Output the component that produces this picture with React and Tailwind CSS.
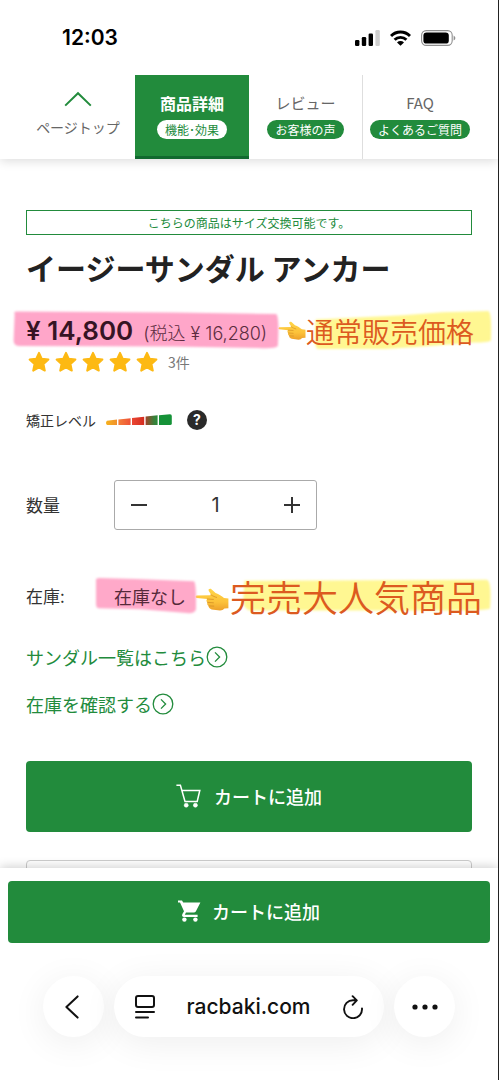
import React, { useState } from "react";

function StatusBar() {
  return (
    <div className="relative z-20 flex h-[75px] shrink-0 items-center justify-between bg-white pr-[42px] pl-[62px]">
      <time className="font-['Inter',sans-serif] text-[21px] leading-7 font-semibold text-black">12:03</time>
      <div className="flex items-center gap-[10px]">
        <svg width="25" height="16" viewBox="0 0 25 16" aria-label="電波">
          <rect x="0" y="10" width="4.4" height="6" rx="1.2" />
          <rect x="6.8" y="7" width="4.4" height="9" rx="1.2" />
          <rect x="13.6" y="3.6" width="4.4" height="12.4" rx="1.2" />
          <rect x="20.4" y="0" width="4.4" height="16" rx="1.2" fill="#cfcfcf" />
        </svg>
        <svg width="21" height="16" viewBox="0 0 21 16" aria-label="Wi-Fi">
          <g fill="none" stroke="#000" strokeWidth="2.9">
            <path d="M1 6 A13.4 13.4 0 0 1 20 6" />
            <path d="M4.6 9.8 A8.3 8.3 0 0 1 16.4 9.8" />
          </g>
          <path d="M10.5 15.8 L7 12.4 A5 5 0 0 1 14 12.4 Z" />
        </svg>
        <svg width="35" height="16" viewBox="0 0 35 16" aria-label="バッテリー">
          <rect x="0.6" y="0.6" width="30.6" height="14.8" rx="4.6" fill="none" stroke="#8f8f8f" strokeWidth="1.1" />
          <rect x="2.4" y="2.4" width="25.4" height="11.2" rx="3.2" />
          <path d="M32.6 5.4 Q34.4 6.4 34.4 8 Q34.4 9.6 32.6 10.6 Z" fill="#8f8f8f" />
        </svg>
      </div>
    </div>
  );
}

function Tab({ title, tag, active }) {
  return (
    <a
      href="#"
      className={
        active
          ? "flex flex-col items-center border-b-[3px] border-[#11692f] bg-[#228b3c] pt-[18px] text-white"
          : "flex flex-col items-center border-r border-[#dedede] pt-[18px] text-[#666] last:border-r-0"
      }
    >
      <span className={active ? "text-[16px] leading-5 font-bold" : "text-[15px] leading-5"}>{title}</span>
      <span
        className={
          active
            ? "mt-[7px] rounded-full bg-white px-2 text-[12px] leading-[19px] whitespace-nowrap text-[#228b3c]"
            : "mt-[7px] rounded-full bg-[#228b3c] px-2 text-[12px] leading-[19px] whitespace-nowrap text-white"
        }
      >
        {tag}
      </span>
    </a>
  );
}

function PageNav() {
  return (
    <nav className="relative z-10 grid h-[84px] shrink-0 grid-cols-4 bg-white px-[21px] shadow-[0_2px_10px_rgba(0,0,0,0.14)]">
      <a href="#" className="flex flex-col items-center pt-4 text-[#666]">
        <svg width="28" height="16" viewBox="0 0 28 16" fill="none" stroke="#228b3c" strokeWidth="2" aria-hidden="true">
          <path d="M1.2 14.6 L14 2.2 L26.8 14.6" />
        </svg>
        <span className="mt-[10px] text-[14px] leading-5 whitespace-nowrap">ページトップ</span>
      </a>
      <Tab title="商品詳細" tag="機能･効果" active />
      <Tab title="レビュー" tag="お客様の声" />
      <Tab title="FAQ" tag="よくあるご質問" />
    </nav>
  );
}

function PointingHand({ className }) {
  return (
    <svg className={className} viewBox="0 0 34 24" aria-label="指差し">
      <defs>
        <linearGradient id="skin" x1="0" y1="0" x2="0" y2="1">
          <stop offset="0" stopColor="#ffd548" />
          <stop offset="0.6" stopColor="#fcc23a" />
          <stop offset="1" stopColor="#eda02a" />
        </linearGradient>
      </defs>
      <path
        fill="url(#skin)"
        d="M1.6 7.4 C0.2 7.6 0.2 9.8 1.8 10 L12.2 11 C11 12 11.4 13.8 12.4 14.4 C11.8 15.8 12.4 17.2 13.6 17.8 C13.4 19.6 14.8 21 16.6 21.4 L25 22.6 C27 22.6 28.4 21.6 29.4 20.6 L33.4 20.2 L33.4 10.6 L29 10 C26.6 8 24 6.2 20.6 5 L16.4 1.2 C15 0.2 12.8 1.2 13.8 3 L16 6.6 L15 7.2 Z"
      />
      <path
        fill="none"
        stroke="#d08a22"
        strokeWidth="0.7"
        strokeLinecap="round"
        d="M12.4 11 L18.4 11.4 M12.6 14.4 L18.4 14.8 M13.8 17.9 L18.8 18.1 M16 6.8 C18 8.2 20 9 21.6 9.4"
      />
    </svg>
  );
}

function Marker({ className, d, fill }) {
  return (
    <svg className={className} viewBox="0 0 100 40" preserveAspectRatio="none" aria-hidden="true">
      <path d={d} fill={fill} />
    </svg>
  );
}

function Stars() {
  return (
    <div className="flex gap-[5px] pl-[2px]" role="img" aria-label="5つ星">
      {[0, 1, 2, 3, 4].map((i) => (
        <svg key={i} width="22" height="22" viewBox="0 0 22 22" fill="#fdb913" stroke="#fdb913" strokeWidth="2" strokeLinejoin="round" aria-hidden="true">
          <path d="M11 1.8 L13.8 7.8 L20.4 8.6 L15.5 13.1 L16.8 19.6 L11 16.4 L5.2 19.6 L6.5 13.1 L1.6 8.6 L8.2 7.8 Z" />
        </svg>
      ))}
    </div>
  );
}

function LevelGauge() {
  return (
    <svg width="67" height="12" viewBox="0 0 67 12" aria-label="矯正レベル 5">
      <defs>
        <linearGradient id="g1">
          <stop offset="0" stopColor="#f6b21c" />
          <stop offset="1" stopColor="#f0902c" />
        </linearGradient>
        <linearGradient id="g2">
          <stop offset="0" stopColor="#f4803a" />
          <stop offset="1" stopColor="#ee5238" />
        </linearGradient>
        <linearGradient id="g3">
          <stop offset="0" stopColor="#ea4632" />
          <stop offset="1" stopColor="#d42c20" />
        </linearGradient>
        <linearGradient id="g4">
          <stop offset="0" stopColor="#a0432a" />
          <stop offset="0.7" stopColor="#3a7f3a" />
          <stop offset="1" stopColor="#2a8a3a" />
        </linearGradient>
      </defs>
      <path d="M2 6.8 L12 5.6 V11 H2 Q0 9 2 6.8 Z" fill="url(#g1)" />
      <path d="M13.4 5.4 L25.6 4.2 V11 H13.4 Z" fill="url(#g2)" />
      <path d="M27 4 L39.2 2.7 V11 H27 Z" fill="url(#g3)" />
      <path d="M40.6 2.5 L52.6 1.3 V11 H40.6 Z" fill="url(#g4)" />
      <path d="M54 1.2 L65 0.2 Q66.8 0.2 66.8 2 V9.4 Q66.8 11 65 11 H54 Z" fill="#159238" />
    </svg>
  );
}

function CircleChevron() {
  return (
    <svg width="22" height="22" viewBox="0 0 22 22" fill="none" stroke="currentColor" strokeWidth="1.3" aria-hidden="true">
      <circle cx="11" cy="11" r="9.8" />
      <path d="M9 6.4 L13.6 11 L9 15.6" />
    </svg>
  );
}

function Product() {
  const [qty, setQty] = useState(1);
  return (
    <main className="min-h-0 flex-1 overflow-hidden px-[26px] pt-[51px]">
      <p className="border border-[#228b3c] text-center text-[12px] leading-[23px] text-[#228b3c]">
        こちらの商品はサイズ交換可能です。
      </p>
      <h1 className="mt-3 text-[30px] leading-10 font-bold whitespace-nowrap text-[#222]">イージーサンダル アンカー</h1>

      <div className="mt-[26px] flex h-9 items-center whitespace-nowrap">
        <div className="relative isolate flex w-[252px] shrink-0 items-baseline gap-[10px] font-['Inter','Noto_Sans_CJK_JP',sans-serif]">
          <Marker
            className="absolute -top-[5px] -left-[14px] -z-10 h-10 w-[268px] blur-[1px]"
            fill="#ffa6c9"
            d="M1 4 Q0.4 1.5 2 1.5 L60 2.5 L98.6 4 Q99.8 6 99.2 36 Q98 39 92 38 L60 36.5 L3 36 Q0.5 36 0.6 30 Z"
          />
          <span className="text-[26px] leading-[32px] font-semibold text-[#361424]">¥ 14,800</span>
          <span className="text-[18px] leading-5 font-light text-[#5c2c40]">(税込 ¥ 16,280)</span>
        </div>
        <PointingHand className="h-5 w-7 shrink-0" />
        <div className="relative isolate text-[28px] leading-9 font-[350] text-[#dc5a20]">
          <Marker
            className="absolute -top-1 left-2 -z-10 h-[42px] w-[178px] blur-[1px]"
            fill="#fff792"
            d="M1 10 L50 6 L72 3 L98 2 Q100 4 99.4 30 Q98 32 90 32 L60 36 L40 38 L2 38 Q0 36 0.6 20 Z"
          />
          通常販売価格
        </div>
      </div>
      <div className="flex h-[25px] items-center gap-[10px]">
        <Stars />
        <span className="text-[14px] leading-5 text-[#777]">3件</span>
      </div>

      <div className="mt-9 flex h-5 items-center">
        <span className="text-[14px] leading-5 whitespace-nowrap text-[#333]">矯正レベル</span>
        <span className="ml-[9px]">
          <LevelGauge />
        </span>
        <button
          type="button"
          aria-label="矯正レベルについて"
          className="ml-[15px] flex size-5 items-center justify-center rounded-full bg-[#2a2a2a] font-['Inter',sans-serif] text-[14px] leading-5 font-bold text-white"
        >
          ?
        </button>
      </div>

      <div className="mt-[50px] flex items-center">
        <label htmlFor="qty" className="w-[88px] text-[17px] leading-6 text-[#333]">
          数量
        </label>
        <div className="flex h-[50px] w-[203px] items-center justify-between rounded-[3px] border border-[#aaa] px-4 text-[#333]">
          <button type="button" aria-label="減らす" onClick={() => setQty(Math.max(1, qty - 1))}>
            <svg width="16" height="16" viewBox="0 0 16 16" stroke="currentColor" strokeWidth="2" aria-hidden="true">
              <path d="M0 8 H16" />
            </svg>
          </button>
          <input
            id="qty"
            value={qty}
            readOnly
            className="w-20 bg-transparent text-center font-['Inter',sans-serif] text-[20px] leading-6 outline-none"
          />
          <button type="button" aria-label="増やす" onClick={() => setQty(qty + 1)}>
            <svg width="16" height="16" viewBox="0 0 16 16" stroke="currentColor" strokeWidth="2" aria-hidden="true">
              <path d="M0 8 H16 M8 0 V16" />
            </svg>
          </button>
        </div>
      </div>

      <div className="mt-[46px] flex h-10 items-center whitespace-nowrap">
        <span className="w-[88px] shrink-0 text-[17px] leading-6 text-[#333]">在庫:</span>
        <div className="relative isolate w-20 shrink-0 text-[18px] leading-6 text-[#552a3a]">
          <Marker
            className="absolute -top-[7px] -left-[19px] -z-10 h-[38px] w-[102px] blur-[1px]"
            fill="#ffa9c9"
            d="M1 3 Q1 1 4 1 L40 2 L97 4.6 Q99.4 6 99 34 Q98 38.6 90 38 L45 34 L4 33 Q0.6 33 1 26 Z"
          />
          在庫なし
        </div>
        <PointingHand className="mt-2 h-6 w-9 shrink-0" />
        <div className="relative isolate text-[36px] leading-10 font-[350] text-[#dc5a20]">
          <Marker
            className="absolute top-[2px] left-3 -z-10 h-9 w-[250px] blur-[1px]"
            fill="#fff792"
            d="M1 3 L50 2.5 L98 2 Q100 4 99.2 34 Q98 36 90 36 L3 36 Q0 34 0.6 20 Z"
          />
          完売大人気商品
        </div>
      </div>

      <div className="mt-[29px] flex flex-col items-start gap-[23px] text-[18px] leading-6 text-[#228b3c]">
        <a href="#" className="flex items-center">
          サンダル一覧はこちら
          <CircleChevron />
        </a>
        <a href="#" className="flex items-center">
          在庫を確認する
          <CircleChevron />
        </a>
      </div>

      <button
        type="button"
        className="mt-[45px] flex h-[71px] w-full items-center justify-center gap-[13px] rounded bg-[#228b3c] pb-[2px] text-[18px] leading-6 font-medium text-white"
      >
        <svg width="25" height="24" viewBox="0 0 25 24" fill="none" stroke="currentColor" strokeWidth="1.5" aria-hidden="true">
          <path d="M0.4 1.2 H4.4 L9 17.4 H21.2 L23.8 6.4 H6.2" />
          <circle cx="10.2" cy="21.2" r="2" fill="currentColor" strokeWidth="0.6" />
          <circle cx="19.4" cy="21.2" r="2" fill="currentColor" strokeWidth="0.6" />
        </svg>
        カートに追加
      </button>
      <div className="mt-7 h-[71px] rounded border border-[#ccc] bg-white" />
    </main>
  );
}

function BottomBars() {
  return (
    <footer className="relative z-10 shrink-0 bg-white shadow-[0_-1px_10px_rgba(0,0,0,0.2)]">
      <div className="px-2 pt-[13px]">
        <button
          type="button"
          className="flex h-[62px] w-full items-center justify-center gap-[11px] rounded bg-[#228b3c] pb-[2px] text-[18px] leading-6 font-medium text-white"
        >
          <svg width="23" height="22" viewBox="0 0 23 22" fill="currentColor" aria-hidden="true">
            <path d="M0 0.4 H4 L5.2 2.4 H22.4 L17.8 11.6 Q17 12.6 16 12.6 H8 L6.8 14.8 H19.6 V17 H6 Q3.2 16.6 4.4 14 L6 11.2 L2 2.6 H0 Z" />
            <circle cx="6.4" cy="19.6" r="2.2" />
            <circle cx="17.4" cy="19.6" r="2.2" />
          </svg>
          カートに追加
        </button>
      </div>
      <div className="flex gap-[10px] px-[43px] pt-[33px] pb-[43px] text-[#111]">
        <button
          type="button"
          aria-label="戻る"
          className="flex size-[61px] shrink-0 items-center justify-center rounded-full bg-white shadow-[0_6px_36px_rgba(0,0,0,0.07)]"
        >
          <svg width="14" height="24" viewBox="0 0 14 24" fill="none" stroke="currentColor" strokeWidth="2" strokeLinecap="round" strokeLinejoin="round" className="mr-1" aria-hidden="true">
            <path d="M12.6 1.4 L1.4 12 L12.6 22.6" />
          </svg>
        </button>
        <div className="flex h-[61px] flex-1 items-center justify-between rounded-full bg-white pr-5 pl-[21px] shadow-[0_6px_36px_rgba(0,0,0,0.07)]">
          <button type="button" aria-label="ページメニュー">
            <svg width="20" height="24" viewBox="0 0 20 24" fill="none" stroke="currentColor" strokeWidth="2" strokeLinecap="round" aria-hidden="true">
              <rect x="1" y="1" width="18" height="11" rx="2" />
              <path d="M1 17 H19 M1 22.4 H13" />
            </svg>
          </button>
          <span className="font-['Inter',sans-serif] text-[21px] leading-7 font-medium">racbaki.com</span>
          <button type="button" aria-label="再読み込み">
            <svg width="22" height="24" viewBox="0 0 22 24" fill="none" stroke="currentColor" strokeWidth="1.9" strokeLinecap="round" strokeLinejoin="round" aria-hidden="true">
              <path d="M20 13.4 A9 9 0 1 1 11 5.2 L14.6 5.4 M10.6 1.2 L14.8 5.4 L10.6 9.8" />
            </svg>
          </button>
        </div>
        <button
          type="button"
          aria-label="その他"
          className="flex size-[61px] shrink-0 items-center justify-center rounded-full bg-white shadow-[0_6px_36px_rgba(0,0,0,0.07)]"
        >
          <svg width="26" height="6" viewBox="0 0 26 6" fill="currentColor" aria-hidden="true">
            <circle cx="3" cy="3" r="2.6" />
            <circle cx="13" cy="3" r="2.6" />
            <circle cx="23" cy="3" r="2.6" />
          </svg>
        </button>
      </div>
    </footer>
  );
}

export default function App() {
  return (
    <div
      lang="ja"
      className="flex h-screen flex-col overflow-hidden border-r border-[#222] bg-white font-['Noto_Sans_CJK_JP',sans-serif]"
    >
      <StatusBar />
      <PageNav />
      <Product />
      <BottomBars />
    </div>
  );
}
